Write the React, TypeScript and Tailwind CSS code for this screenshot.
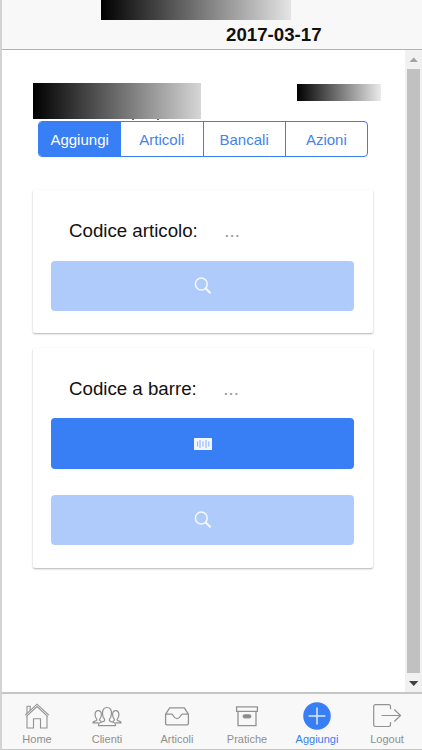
import type { ReactNode } from 'react'
import clsx from 'clsx'

const SEGMENTS = ['Aggiungi', 'Articoli', 'Bancali', 'Azioni']

function SearchIcon() {
  return (
    <svg width="18" height="18" viewBox="0 0 18 18" fill="none" stroke="#f5f9ff" strokeLinecap="round">
      <circle cx="7.3" cy="7" r="5.9" strokeWidth="1.5" />
      <path d="M11.8 11.5 16 15.700" strokeWidth="2" />
    </svg>
  )
}

function BarcodeIcon() {
  return (
    <svg width="18" height="12" viewBox="0 0 18 12">
      <rect width="18" height="12" rx="0.5" fill="#f2f7ff" />
      <path d="M3.5 3.5v5M6 2v8M9 3.5v5M12 2v8M14.800 3.5v5" stroke="#8fb5f8" strokeWidth="1.1" />
    </svg>
  )
}

function HomeIcon() {
  return (
    <svg width="28" height="28" viewBox="0 0 28 28" fill="none" stroke="#929292" strokeWidth="1.1">
      <path d="M2.2 13.2 14 2.2l11.8 11M3.4 14.4 14 4.6l10.6 9.8" />
      <path d="M4 14v12h6.5v-9.300h7V26H24V14" />
      <path d="M4 11.400V4.200h3.200v4.200" />
    </svg>
  )
}

function PeopleIcon() {
  return (
    <svg width="30" height="28" viewBox="0 0 30 28" fill="none" stroke="#929292" strokeWidth="1.2" strokeLinejoin="round">
      <path d="M6.4 23.6h17.2c-.2-2.8-1.2-3.2-4.6-4-1.8-.5-1.8-1.7-1.4-2.6 1.3-1.3 1.8-3.200 1.900-5.600.1-3.600-1.400-5.900-4.500-5.900s-4.600 2.300-4.500 5.900c.1 2.400.6 4.300 1.900 5.600.4.900.4 2.100-1.400 2.600-3.400.8-4.400 1.200-4.600 4Z" />
      <path d="M9.300 19.300c-1.900-.5-1.900-1.500-1.500-2.200.9-1 1.600-2.500 1.600-4.400 0-2.500-1.100-4-3.100-4s-3.200 1.500-3.200 4c0 1.900.7 3.400 1.600 4.400.5 1-.1 1.700-1.800 2-1.400.3-1.900.7-2 1.700h5.800" />
      <path d="M20.700 19.300c1.900-.5 1.900-1.500 1.500-2.200-.9-1-1.600-2.500-1.600-4.400 0-2.500 1.100-4 3.100-4s3.200 1.500 3.200 4c0 1.900-.7 3.400-1.600 4.400-.5 1 .1 1.700 1.800 2 1.400.3 1.900.7 2 1.700h-5.800" />
    </svg>
  )
}

function TrayIcon() {
  return (
    <svg width="28" height="28" viewBox="0 0 28 28" fill="none" stroke="#929292" strokeWidth="1.3" strokeLinejoin="round">
      <path d="M6.700 5.800h14.600l4.100 6.400v9.400c0 .8-.4 1.200-1.200 1.200H3.800c-.8 0-1.200-.4-1.200-1.200v-9.400Z" />
      <path d="M2.600 12.200h6.200c1.600 0 1.600 4.400 5.200 4.400s3.600-4.400 5.200-4.400h6.200" />
    </svg>
  )
}

function BoxIcon() {
  return (
    <svg width="28" height="28" viewBox="0 0 28 28" fill="none" stroke="#929292" strokeWidth="1.3">
      <path d="M3.600 4.800h20.800v4.600H3.600ZM5 9.400v14.200h18V9.400" />
      <rect x="10.200" y="12.800" width="7.600" height="3" rx="1.5" fill="#888" />
    </svg>
  )
}

function PlusIcon() {
  return (
    <svg width="28" height="28" viewBox="0 0 28 28">
      <circle cx="14" cy="14" r="13.8" fill="#387ef5" />
      <path d="M14 5.600v16.800M5.600 14h16.800" stroke="#dce8ff" strokeWidth="1.5" />
    </svg>
  )
}

function LogoutIcon() {
  return (
    <svg width="30" height="28" viewBox="0 0 30 28" fill="none" stroke="#929292" strokeWidth="1.2">
      <path d="M18.500 7.200V4.600c0-1.200-.7-1.900-1.900-1.900H3.600c-1.200 0-1.900.7-1.900 1.900v18c0 1.200.7 1.900 1.900 1.900h13c1.200 0 1.900-.7 1.900-1.900V20" />
      <path d="M9.500 13.500h19M22.300 7.500l6.200 6-6.200 6" />
    </svg>
  )
}

const TABS: { label: string; icon: ReactNode; active?: boolean }[] = [
  { label: 'Home', icon: <HomeIcon /> },
  { label: 'Clienti', icon: <PeopleIcon /> },
  { label: 'Articoli', icon: <TrayIcon /> },
  { label: 'Pratiche', icon: <BoxIcon /> },
  { label: 'Aggiungi', icon: <PlusIcon />, active: true },
  { label: 'Logout', icon: <LogoutIcon /> },
]

function Header() {
  return (
    <header className="h-[50px] shrink-0 border-b border-[#b2b2b2] bg-[#f8f8f8]">
      <div className="ml-[99px] h-5 w-[190px] bg-linear-to-r/srgb from-black to-[#e4e4e4]" />
      <h1 className="mt-1 ml-[224px] text-[18.7px] leading-[22px] font-bold text-[#111]">2017-03-17</h1>
    </header>
  )
}

function ActionButton({ children, disabled, className }: { children: ReactNode; disabled?: boolean; className?: string }) {
  return (
    <button
      className={clsx(
        'flex w-[303px] items-center justify-center rounded-[4px]',
        disabled ? 'h-[50px] bg-[#afcbfb]' : 'h-[51px] bg-[#387ef5]',
        className,
      )}
    >
      {children}
    </button>
  )
}

function Field({ label }: { label: string }) {
  return (
    <div className="flex pl-[18px] text-[18.7px] leading-[22px] text-[#111]">
      <span>{label}</span>
      <span className="ml-[26.5px] text-[#999]">...</span>
    </div>
  )
}

function Scrollbar() {
  return (
    <div className="flex w-[17px] flex-col items-center bg-[#f1f1f1]">
      <svg className="shrink-0" width="17" height="19" viewBox="0 0 17 19">
        <path d="m4.500 12 4.200-4.500 4.200 4.500Z" fill="#a3a3a3" />
      </svg>
      <div className="w-[13px] flex-1 bg-[#c1c1c1]" />
      <svg className="shrink-0" width="17" height="19" viewBox="0 0 17 19">
        <path d="M4 8h9.400l-4.700 5Z" fill="#404040" />
      </svg>
    </div>
  )
}

export default function App() {
  return (
    <div className="flex h-[750px] w-[422px] flex-col overflow-hidden border-l-2 border-[#d2d3d5] bg-white font-['Liberation_Sans',Arial,sans-serif]">
      <Header />
      <div className="flex min-h-0 flex-1">
        <main className="min-w-0 flex-1 pl-[31px]">
          <div className="mt-[33px] flex h-[35px] items-start">
            <div className="h-9 w-[168px] shrink-0 bg-linear-to-r/srgb from-black to-[#d6d6d6]" />
            <div className="mt-px ml-24 h-[17px] w-[84px] shrink-0 bg-linear-to-r/srgb from-black to-[#ebebeb]" />
          </div>
          <div className="mt-px flex h-[2px] gap-[23px] pl-[99px]">
            <i className="h-px w-[2px] bg-[#666]" />
            <i className="h-px w-[2px] bg-[#666]" />
          </div>
          <div className="ml-[5px] flex h-9 w-[330px] divide-x divide-[#387ef5] overflow-hidden rounded-[4px] border border-[#387ef5] text-[15px]">
            {SEGMENTS.map((name, i) => (
              <button
                key={name}
                className={clsx('flex-1 basis-0 pt-[2px]', i === 0 ? 'bg-[#387ef5] text-white' : 'text-[#4583ea]')}
              >
                {name}
              </button>
            ))}
          </div>

          <section className="mt-[33px] h-[143px] w-[340px] rounded-[2px] px-[18px] pt-[30px] shadow-[0_1px_2px_rgba(0,0,0,0.3)]">
            <Field label="Codice articolo:" />
            <ActionButton disabled className="mt-[19px]">
              <SearchIcon />
            </ActionButton>
          </section>

          <section className="mt-[15px] h-[220px] w-[340px] rounded-[2px] px-[18px] pt-[30px] shadow-[0_1px_2px_rgba(0,0,0,0.3)]">
            <Field label="Codice a barre:" />
            <ActionButton className="mt-[18px]">
              <BarcodeIcon />
            </ActionButton>
            <ActionButton disabled className="mt-[26px]">
              <SearchIcon />
            </ActionButton>
          </section>
        </main>
        <Scrollbar />
      </div>
      <nav className="flex h-[58px] shrink-0 border-t-2 border-b border-[#c6c6c6] bg-[#f8f8f8]">
        {TABS.map((tab) => (
          <a
            key={tab.label}
            className={clsx(
              'flex flex-1 basis-0 flex-col items-center pt-2 text-[11px] leading-[14px]',
              tab.active ? 'text-[#387ef5]' : 'text-[#8f8f8f]',
            )}
          >
            {tab.icon}
            <span className="mt-[2px]">{tab.label}</span>
          </a>
        ))}
      </nav>
    </div>
  )
}
